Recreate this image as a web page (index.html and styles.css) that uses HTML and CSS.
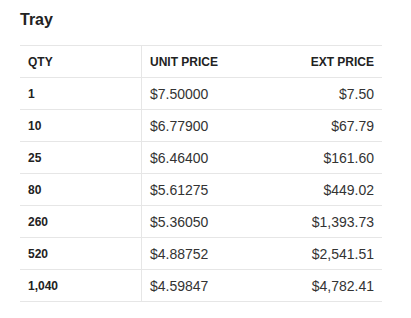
FILE: index.html
```html
<!DOCTYPE html>
<html>
<head>
<meta charset="utf-8">
<link rel="stylesheet" href="styles.css">
</head>
<body>
<div class="panel">
  <h2 class="title">Tray</h2>
  <table class="prices">
    <thead>
      <tr><th class="qty">QTY</th><th class="unit">UNIT PRICE</th><th class="ext">EXT PRICE</th></tr>
    </thead>
    <tbody>
      <tr><td class="qty">1</td><td class="unit">$7.50000</td><td class="ext">$7.50</td></tr>
      <tr><td class="qty">10</td><td class="unit">$6.77900</td><td class="ext">$67.79</td></tr>
      <tr><td class="qty">25</td><td class="unit">$6.46400</td><td class="ext">$161.60</td></tr>
      <tr><td class="qty">80</td><td class="unit">$5.61275</td><td class="ext">$449.02</td></tr>
      <tr><td class="qty">260</td><td class="unit">$5.36050</td><td class="ext">$1,393.73</td></tr>
      <tr><td class="qty">520</td><td class="unit">$4.88752</td><td class="ext">$2,541.51</td></tr>
      <tr><td class="qty">1,040</td><td class="unit">$4.59847</td><td class="ext">$4,782.41</td></tr>
    </tbody>
  </table>
</div>
</body>
</html>
```
FILE: styles.css
```css
html, body {
  margin: 0;
  padding: 0;
  background: #ffffff;
}
body {
  font-family: "Liberation Sans", Arial, sans-serif;
  color: #333333;
}
.panel {
  padding: 10px 29px 0 20px;
}
.title {
  margin: 0 0 15px 0;
  font-size: 16px;
  font-weight: bold;
  line-height: 20px;
  color: #222222;
}
.prices {
  width: 362px;
  border-collapse: collapse;
  border-top: 1px solid #e6e6e6;
}
.prices th, .prices td {
  height: 31px;
  padding: 0 8px;
  border-bottom: 1px solid #e6e6e6;
  vertical-align: middle;
}
.prices th {
  font-size: 12px;
  font-weight: bold;
  color: #222222;
  text-align: left;
}
.prices td {
  font-size: 14px;
  color: #333333;
}
.prices .qty {
  width: 105px;
  border-right: 1px solid #e6e6e6;
  font-size: 12px;
  font-weight: bold;
  color: #222222;
}
.prices .unit {
  text-align: left;
}
.prices .ext {
  text-align: right;
}
```
